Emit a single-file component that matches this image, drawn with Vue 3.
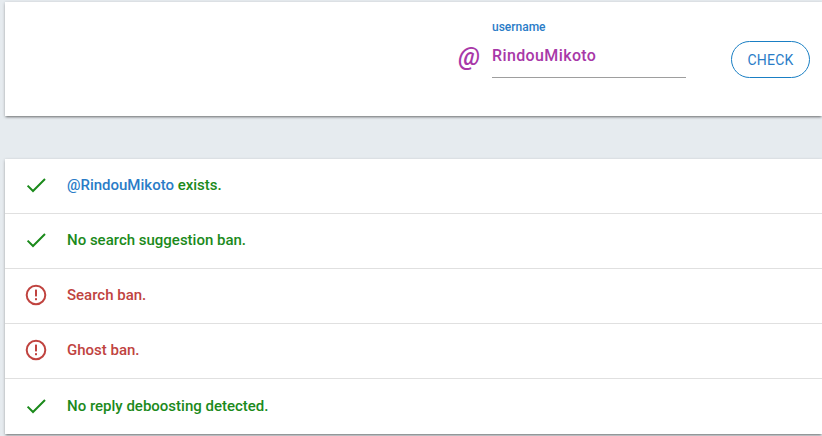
<script setup>
const rows = [
  { ok: true, at: '@RindouMikoto', text: ' exists.' },
  { ok: true, text: 'No search suggestion ban.' },
  { ok: false, text: 'Search ban.' },
  { ok: false, text: 'Ghost ban.' },
  { ok: true, text: 'No reply deboosting detected.' },
]
</script>

<template>
  <div class="page">
    <section class="search card">
      <span class="at">@</span>
      <div class="field">
        <label class="label">username</label>
        <div class="value">RindouMikoto</div>
      </div>
      <button class="check">CHECK</button>
    </section>
    <section class="results card">
      <div v-for="(r, i) in rows" :key="i" class="row" :class="r.ok ? 'ok' : 'bad'">
        <svg v-if="r.ok" class="icon" viewBox="0 0 24 24" width="24" height="24">
          <path d="M3.6 12.6 L9 18 L21 6" fill="none" stroke="#1b8a1b" stroke-width="2" />
        </svg>
        <svg v-else class="icon" viewBox="0 0 24 24" width="24" height="24">
          <circle cx="12" cy="12" r="9.3" fill="none" stroke="#c0433f" stroke-width="2" />
          <rect x="11" y="6.6" width="2" height="6.8" fill="#c0433f" />
          <rect x="11" y="15.2" width="2" height="2" fill="#c0433f" />
        </svg>
        <span class="text"><span v-if="r.at" class="mention">{{ r.at }}</span>{{ r.text }}</span>
      </div>
    </section>
  </div>
</template>

<style>
html, body { margin: 0; background: #e6ebef; }
</style>

<style scoped>
.page {
  width: 822px;
  height: 436px;
  box-sizing: border-box;
  padding: 2px 0 0 5px;
  background: #e6ebef;
  overflow: hidden;
  font-family: Roboto, sans-serif;
}
.card {
  background: #fff;
  box-shadow: 0 2px 2px -1px rgba(0,0,0,.35), 0 1px 3px rgba(0,0,0,.25);
}
.search {
  height: 114px;
  box-sizing: border-box;
  display: flex;
  align-items: flex-start;
  justify-content: flex-end;
  padding-right: 12px;
}
.at {
  font-family: Roboto, sans-serif;
  font-style: italic;
  font-weight: 500;
  font-size: 25px;
  line-height: 28px;
  color: #a838a8;
  margin: 41px 12px 0 0;
}
.field { width: 194px; margin-top: 17px; }
.label {
  display: block;
  font-size: 12px;
  font-weight: 500;
  line-height: 16px;
  color: #2a7cc7;
}
.value {
  height: 40px;
  box-sizing: border-box;
  padding-top: 6px;
  font-size: 16px;
  font-weight: 500;
  line-height: 24px;
  letter-spacing: .38px;
  color: #a838a8;
  border-bottom: 1px solid #9e9e9e;
  margin-top: 3px;
}
.check {
  width: 79px;
  height: 37px;
  margin: 39px 0 0 45px;
  padding: 0;
  background: #fff;
  border: 1px solid #1a7fc4;
  border-radius: 19px;
  font-family: Roboto, sans-serif;
  font-size: 14px;
  font-weight: 400;
  letter-spacing: .2px;
  color: #2a7cc7;
}
.results { margin-top: 43px; }
.row {
  height: 55px;
  box-sizing: border-box;
  display: flex;
  align-items: center;
  padding: 0 0 2px 19px;
  border-bottom: 1px solid #e0e0e0;
}
.row:last-child { border-bottom: 0; }
.icon { flex: none; margin-right: 19px; }
.text {
  font-size: 15px;
  font-weight: 500;
  white-space: pre;
}
.ok .text { color: #1b8a1b; }
.bad .text { color: #c0433f; }
.mention { color: #2a7cc7; }
</style>
